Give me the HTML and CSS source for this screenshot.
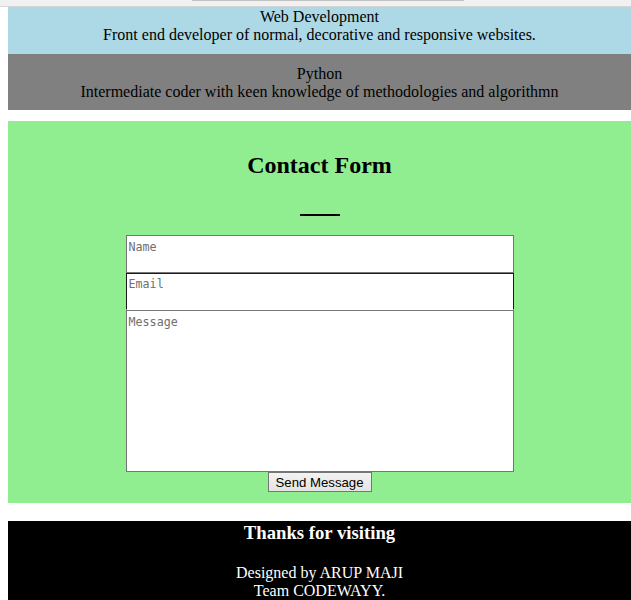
FILE: index.html
```html
<!DOCTYPE html>
<html>
<head>
<meta charset="utf-8">
<title>Portfolio</title>
<link rel="stylesheet" href="styles.css">
</head>
<body>
<div class="strip"><div class="thumb"></div></div>
<div class="page">
  <section class="skill skill-web">
    Web Development<br>
    Front end developer of normal, decorative and responsive websites.
  </section>
  <section class="skill skill-python">
    Python<br>
    Intermediate coder with keen knowledge of methodologies and algorithmn
  </section>
  <section class="contact">
    <h2 class="contact-title">Contact Form</h2>
    <div class="rule"></div>
    <form class="form">
      <input class="field field-name" type="text" placeholder="Name">
      <input class="field field-email" type="email" placeholder="Email">
      <textarea class="field field-msg" placeholder="Message"></textarea>
      <button class="send" type="button">Send Message</button>
    </form>
  </section>
  <footer class="footer">
    <h3 class="footer-title">Thanks for visiting</h3>
    <p class="footer-text">Designed by ARUP MAJI<br>Team CODEWAYY.</p>
  </footer>
</div>
</body>
</html>
```

FILE: styles.css
```css
html, body {
  margin: 0;
  padding: 0;
  overflow: hidden;
  background: #fff;
}
body {
  font-family: "Liberation Serif", "Times New Roman", serif;
  font-size: 16px;
  color: #000;
}
.strip {
  height: 6px;
  background: #f1f1f1;
  border-bottom: 1px solid #d6d6d6;
  position: relative;
}
.thumb {
  position: absolute;
  left: 192px;
  top: 0;
  width: 272px;
  height: 1px;
  background: #c2c2c2;
}
.page {
  padding-left: 8px;
}
.skill {
  text-align: center;
  line-height: 18px;
}
.skill-web {
  background: #add8e6;
  padding: 1px 0 10px;
}
.skill-python {
  background: #808080;
  padding: 11px 0 9px;
}
.contact {
  background: #90ee90;
  margin-top: 11px;
  padding: 10px 0 11px;
  text-align: center;
}
.contact-title {
  margin: 20px 0 0;
  font-size: 24px;
  line-height: 28px;
  font-weight: bold;
}
.rule {
  width: 40px;
  height: 2px;
  background: #000;
  margin: 35px auto 19px;
}
.form {
  display: flex;
  flex-direction: column;
  align-items: center;
  margin: 0;
}
.field {
  display: block;
  box-sizing: border-box;
  width: 388px;
  margin: 0;
  border: 1px solid #767676;
  background: #fff;
  font-family: "DejaVu Sans Mono", monospace;
  font-size: 11.7px;
  color: #000;
  outline: none;
  border-radius: 0;
}
.field::placeholder {
  color: #6f6f6f;
}
.field-name {
  height: 38px;
  padding: 4px 2px 19px;
}
.field-email {
  height: 37px;
  padding: 3px 2px 19px;
  border-color: #1b1b1b;
  border-bottom-color: #fff;
}
.field-msg {
  height: 162px;
  padding: 4px 2px;
  resize: none;
}
.send {
  box-sizing: border-box;
  height: 20px;
  width: 104px;
  margin: 0;
  padding: 0;
  font-family: "Liberation Sans", Arial, sans-serif;
  font-size: 13.2px;
  color: #000;
  border: 1px solid #767676;
  border-radius: 0;
  background: linear-gradient(#f3f3f3, #e3e3e3);
}
.footer {
  background: #000;
  color: #fff;
  margin-top: 18px;
  padding: 1px 0 20px;
  text-align: center;
}
.footer-title {
  margin: 0 0 21px;
  font-size: 18.72px;
  line-height: 21px;
  font-weight: bold;
}
.footer-text {
  margin: 0;
  line-height: 18px;
}
```
